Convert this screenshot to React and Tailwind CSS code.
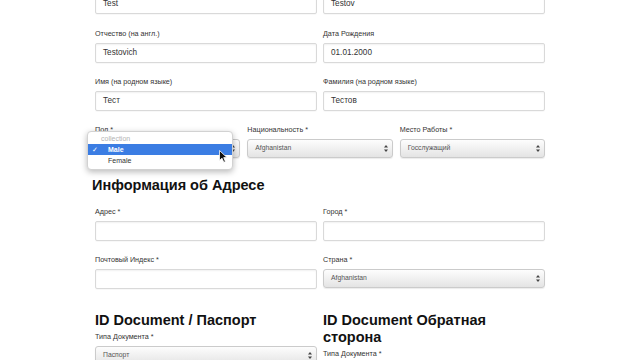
import React from 'react'

function Label({ children }) {
  return <div className="h-[10px] text-[7.2px] leading-[10px] text-[#333] mb-[4px] whitespace-nowrap">{children}</div>
}

function Input({ value }) {
  return (
    <div className="h-[20px] border border-[#d9d9d9] rounded-[2px] bg-white shadow-[inset_0_1px_2px_rgba(0,0,0,0.06),0_1px_1px_rgba(0,0,0,0.03)] pl-[7px] flex items-center text-[8.2px] text-[#333]">
      {value}
    </div>
  )
}

function Arrows() {
  return (
    <svg width="4" height="7" viewBox="0 0 4 7" className="shrink-0">
      <path d="M2 0 L4 2.6 H0 Z" fill="#444" />
      <path d="M0 4.4 H4 L2 7 Z" fill="#444" />
    </svg>
  )
}

function Select({ value }) {
  return (
    <div className="h-[19px] border border-[#cbcbcb] rounded-[3px] bg-gradient-to-b from-[#fdfdfd] to-[#e4e4e4] shadow-[0_1px_1px_rgba(0,0,0,0.08)] pl-[7px] pr-[4px] flex items-center justify-between text-[6.8px] text-[#555]">
      <span>{value}</span>
      <Arrows />
    </div>
  )
}

function Cursor() {
  return (
    <svg width="9" height="13" viewBox="0 0 9 13" className="absolute left-[131px] top-[18px]">
      <path d="M0.5 0.5 L0.5 10.5 L3 8.2 L4.8 12.3 L6.4 11.6 L4.7 7.6 L8 7.6 Z" fill="#111" stroke="#fff" strokeWidth="0.8" strokeLinejoin="round" />
    </svg>
  )
}

export default function App() {
  return (
    <div className="w-[640px] h-[360px] overflow-hidden bg-white font-['Liberation_Sans',Arial,sans-serif]">
      <div className="ml-[95px] w-[450px] -mt-[6px]">
        {/* Personal data */}
        <div className="grid grid-cols-2 gap-x-[6px]">
          <Input value="Test" />
          <Input value="Testov" />
        </div>
        <div className="grid grid-cols-2 gap-x-[6px] mt-[15px]">
          <div>
            <Label>Отчество (на англ.)</Label>
            <Input value="Testovich" />
          </div>
          <div>
            <Label>Дата Рождения</Label>
            <Input value="01.01.2000" />
          </div>
        </div>
        <div className="grid grid-cols-2 gap-x-[6px] mt-[14px]">
          <div>
            <Label>Имя (на родном языке)</Label>
            <Input value="Тест" />
          </div>
          <div>
            <Label>Фамилия (на родном языке)</Label>
            <Input value="Тестов" />
          </div>
        </div>
        <div className="grid grid-cols-3 gap-x-[7px] mt-[14px]">
          <div className="relative">
            <Label>Пол *</Label>
            <Select value="Male" />
            <div className="absolute left-[-8px] top-[6px] w-[146px] bg-white border border-[#d2d2d2] rounded-[4px] shadow-[0_2px_6px_rgba(0,0,0,0.28)] pt-[1px] pb-[3px] text-[7px] leading-[11px]">
              <div className="pl-[13px] text-[#b3b3b3]">collection</div>
              <div className="relative bg-[#3b7de3] text-white font-bold pl-[20px]">
                <span className="absolute left-[4px] top-0 font-normal">✓</span>
                Male
              </div>
              <div className="pl-[20px] text-[#333]">Female</div>
              <Cursor />
            </div>
          </div>
          <div>
            <Label>Национальность *</Label>
            <Select value="Afghanistan" />
          </div>
          <div>
            <Label>Место Работы *</Label>
            <Select value="Госслужащий" />
          </div>
        </div>

        {/* Address */}
        <h2 className="-ml-[3px] mt-[19px] text-[14.5px] leading-[17px] font-bold text-[#111]">Информация об Адресе</h2>
        <div className="grid grid-cols-2 gap-x-[6px] mt-[13px]">
          <div>
            <Label>Адрес *</Label>
            <Input value="" />
          </div>
          <div>
            <Label>Город *</Label>
            <Input value="" />
          </div>
        </div>
        <div className="grid grid-cols-2 gap-x-[6px] mt-[14px]">
          <div>
            <Label>Почтовый Индекс *</Label>
            <Input value="" />
          </div>
          <div>
            <Label>Страна *</Label>
            <Select value="Afghanistan" />
          </div>
        </div>

        {/* Documents */}
        <div className="grid grid-cols-2 gap-x-[6px] mt-[23px] items-start">
          <div>
            <h2 className="text-[14.5px] leading-[17px] font-bold text-[#111] mb-[3px]">ID Document / Паспорт</h2>
            <Label>Типа Документа *</Label>
            <Select value="Паспорт" />
          </div>
          <div>
            <h2 className="text-[14.5px] leading-[17px] font-bold text-[#111] mb-[3px] pr-[50px]">ID Document Обратная сторона</h2>
            <Label>Типа Документа *</Label>
            <Select value="Паспорт" />
          </div>
        </div>
      </div>
    </div>
  )
}
